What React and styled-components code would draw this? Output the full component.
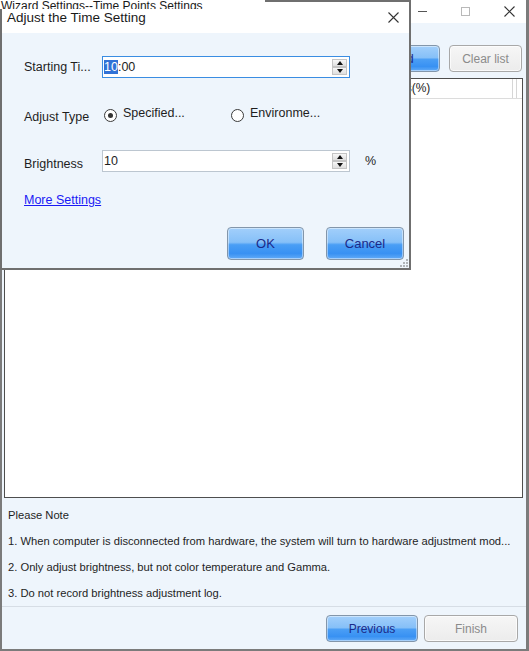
import React from "react";
import styled, { createGlobalStyle } from "styled-components";

const GlobalStyle = createGlobalStyle`
  html, body {
    margin: 0;
    padding: 0;
    background: #ffffff;
  }
  * {
    box-sizing: border-box;
  }
`;

const Screen = styled.div`
  position: relative;
  width: 529px;
  height: 651px;
  overflow: hidden;
  font-family: "Liberation Sans", Arial, sans-serif;
  color: #1e1e1e;
`;

/* ---------- main wizard window ---------- */

const Window = styled.div`
  height: 100%;
  display: flex;
  flex-direction: column;
  background: #eef5fc;
  border: 2px solid #7b7b7b;
  border-top: 0;
  border-right-width: 3px;
`;

const TitleBar = styled.div`
  height: 23px;
  flex: none;
  background: #ffffff;
  display: flex;
  align-items: center;
  justify-content: flex-end;
  gap: 34px;
  padding-right: 11px;
`;

const Toolbar = styled.div`
  flex: none;
  display: flex;
  justify-content: flex-end;
  gap: 9px;
  padding: 22px 4px 6px 0;
`;

const Button = styled.button`
  width: ${({ w }) => w}px;
  height: ${({ h }) => h || 27}px;
  padding: 0;
  border-radius: 4px;
  font-family: "Liberation Sans", Arial, sans-serif;
  font-size: ${({ fs }) => fs || 12}px;
  cursor: pointer;
  ${({ primary }) =>
    primary
      ? `
    border: 1px solid #8396aa;
    color: #1b2a8a;
    background: linear-gradient(#a2cffb 0%, #86c0f8 46%, #4a9ef5 54%, #3891f3 82%, #62abf7 100%);
    box-shadow: inset 0 0 0 1px rgba(255, 255, 255, 0.45);
  `
      : `
    border: 1px solid #a8a8a8;
    color: #8b8b8b;
    background: linear-gradient(#f6f6f6, #ececec);
    box-shadow: inset 0 0 0 1px rgba(255, 255, 255, 0.7);
  `}
`;

const Table = styled.div`
  flex: 1;
  margin: 0 3px 0 2px;
  border: 1px solid #4e4e4e;
  background: #ffffff;
  display: flex;
  flex-direction: column;
`;

const HeaderRow = styled.div`
  height: 20px;
  display: flex;
  border-bottom: 1px solid #dcdcdc;
`;

const HeaderCell = styled.div`
  width: ${({ w }) => (w ? `${w}px` : "auto")};
  flex: ${({ w }) => (w ? "none" : "1")};
  border-right: ${({ last }) => (last ? "0" : "1px solid #d6d6d6")};
  font-size: 12px;
  line-height: 19px;
  padding-left: 3px;
  white-space: nowrap;
  overflow: hidden;
`;

const Notes = styled.div`
  flex: none;
  padding: 4px 0 0 6px;
  font-size: 11.2px;
`;

const NoteLine = styled.div`
  height: 26px;
  line-height: 26px;
  white-space: nowrap;
`;

const Footer = styled.div`
  flex: none;
  border-top: 1px solid #d6dde5;
  display: flex;
  justify-content: flex-end;
  gap: 6px;
  padding: 8px 8px 7px 0;
`;

/* ---------- overlapping dialog ---------- */

const Dialog = styled.div`
  position: absolute;
  top: 0;
  left: 0;
  width: 411px;
  height: 270px;
  border: 2px solid #6f6f6f;
  background: #eef5fc;
  display: flex;
  flex-direction: column;
`;

const DialogTitle = styled.div`
  height: 31px;
  flex: none;
  background: #ffffff;
  display: flex;
  align-items: center;
  justify-content: space-between;
  padding: 0 10px 0 5px;
  font-size: 13.5px;
  color: #1a1a1a;
`;

const DialogBody = styled.div`
  flex: 1;
  padding: 23px 0 0 22px;
  display: flex;
  flex-direction: column;
`;

const FormRow = styled.div`
  height: 22px;
  margin-top: ${({ mt }) => mt || 0}px;
  display: flex;
  align-items: center;
  font-size: 12.5px;
`;

const Label = styled.div`
  width: 78px;
  flex: none;
  white-space: nowrap;
  padding-top: ${({ low }) => low || 0}px;
`;

const Input = styled.div`
  position: relative;
  width: 248px;
  height: 22px;
  background: #ffffff;
  border: 1px solid ${({ focused }) => (focused ? "#3a8de2" : "#bcc6d0")};
  padding-left: 1px;
  font-size: 12.5px;
  line-height: 20px;
  display: flex;
  align-items: flex-start;
`;

const Selected = styled.span`
  background: #3172d6;
  color: #ffffff;
  line-height: 14px;
  margin-top: 3px;
`;

const Plain = styled.span`
  line-height: 14px;
  margin-top: 3px;
`;

const Spin = styled.div`
  position: absolute;
  right: 2px;
  top: 2px;
  width: 15px;
  height: 16px;
  display: flex;
  flex-direction: column;
`;

const SpinHalf = styled.div`
  flex: 1;
  border: 1px solid #c4c4c4;
  background: linear-gradient(#f7f7f7, #dedede);
  display: flex;
  align-items: center;
  justify-content: center;
`;

const Unit = styled.span`
  margin-left: 15px;
  font-size: 12.5px;
`;

const RadioOption = styled.div`
  width: ${({ w }) => (w ? `${w}px` : "auto")};
  display: flex;
  align-items: center;
  gap: 6px;
  margin-left: ${({ ml }) => ml || 0}px;
  white-space: nowrap;
`;

const RadioText = styled.span`
  padding-bottom: 4px;
`;

const RadioDot = styled.span`
  width: 13px;
  height: 13px;
  border-radius: 50%;
  border: 1px solid #3a3a3a;
  background: #ffffff;
  display: flex;
  align-items: center;
  justify-content: center;
  &::after {
    content: "";
    width: 5px;
    height: 5px;
    border-radius: 50%;
    background: ${({ checked }) => (checked ? "#333333" : "transparent")};
  }
`;

const MoreLink = styled.a`
  margin-top: 21px;
  align-self: flex-start;
  font-size: 12.5px;
  line-height: 14px;
  color: #1a1af5;
  text-decoration: underline;
  cursor: pointer;
`;

const DialogActions = styled.div`
  margin-top: 20px;
  display: flex;
  justify-content: flex-end;
  gap: 22px;
  padding-right: 5px;
`;

const Grip = styled.svg`
  position: absolute;
  right: 1px;
  bottom: 1px;
`;

const GhostTitle = styled.div`
  position: absolute;
  top: 0;
  left: 0;
  width: 265px;
  height: 9px;
  overflow: hidden;
  background: #ffffff;
  padding-left: 1px;
  font-size: 12px;
  line-height: 12px;
  color: #1a1a1a;
  white-space: nowrap;
`;

const CloseIcon = ({ color = "#333" }) => (
  <svg width="11" height="11" viewBox="0 0 11 11">
    <path d="M0.5 0.5 L10.5 10.5 M10.5 0.5 L0.5 10.5" stroke={color} strokeWidth="1.1" />
  </svg>
);

const Arrow = ({ up }) => (
  <svg width="6" height="4" viewBox="0 0 6 4">
    <path d={up ? "M0 4 L3 0 L6 4 Z" : "M0 0 L6 0 L3 4 Z"} fill="#111" />
  </svg>
);

const SpinBox = ({ focused, children }) => (
  <Input focused={focused}>
    {children}
    <Spin>
      <SpinHalf>
        <Arrow up />
      </SpinHalf>
      <SpinHalf>
        <Arrow />
      </SpinHalf>
    </Spin>
  </Input>
);

const App = () => {
  return (
    <Screen>
      <GlobalStyle />
      <Window>
        <TitleBar>
          <svg width="9" height="9" viewBox="0 0 9 9">
            <path d="M0 4.5 H9" stroke="#555" strokeWidth="1" />
          </svg>
          <svg width="9" height="9" viewBox="0 0 9 9">
            <rect x="0.5" y="0.5" width="8" height="8" fill="none" stroke="#b9b9b9" />
          </svg>
          <CloseIcon />
        </TitleBar>
        <Toolbar>
          <Button primary w={74}>
            Add
          </Button>
          <Button w={73}>Clear list</Button>
        </Toolbar>
        <Table>
          <HeaderRow>
            <HeaderCell w={80}>No.</HeaderCell>
            <HeaderCell w={267}>Time</HeaderCell>
            <HeaderCell w={161}>Brightness(%)</HeaderCell>
            <HeaderCell w={4} />
            <HeaderCell last />
          </HeaderRow>
        </Table>
        <Notes>
          <NoteLine>Please Note</NoteLine>
          <NoteLine>
            1. When computer is disconnected from hardware, the system will turn to hardware adjustment mod...
          </NoteLine>
          <NoteLine>2. Only adjust brightness, but not color temperature and Gamma.</NoteLine>
          <NoteLine>3. Do not record brightness adjustment log.</NoteLine>
        </Notes>
        <Footer>
          <Button primary w={92}>
            Previous
          </Button>
          <Button w={94}>Finish</Button>
        </Footer>
      </Window>

      <Dialog>
        <DialogTitle>
          <span>Adjust the Time Setting</span>
          <CloseIcon />
        </DialogTitle>
        <DialogBody>
          <FormRow>
            <Label>Starting Ti...</Label>
            <SpinBox focused>
              <Selected>10</Selected>
              <Plain>:00</Plain>
            </SpinBox>
          </FormRow>
          <FormRow mt={26}>
            <Label low={3}>Adjust Type</Label>
            <RadioOption w={127} ml={2}>
              <RadioDot checked />
              <RadioText>Specified...</RadioText>
            </RadioOption>
            <RadioOption>
              <RadioDot />
              <RadioText>Environme...</RadioText>
            </RadioOption>
          </FormRow>
          <FormRow mt={24}>
            <Label low={6}>Brightness</Label>
            <SpinBox>
              <Plain>10</Plain>
            </SpinBox>
            <Unit>%</Unit>
          </FormRow>
          <MoreLink>More Settings</MoreLink>
          <DialogActions>
            <Button primary w={77} h={33} fs={13}>
              OK
            </Button>
            <Button primary w={78} h={33} fs={13}>
              Cancel
            </Button>
          </DialogActions>
        </DialogBody>
        <Grip width="8" height="8" viewBox="0 0 8 8">
          <g fill="#b0b4b8">
            <rect x="6" y="0" width="2" height="2" />
            <rect x="3" y="3" width="2" height="2" />
            <rect x="6" y="3" width="2" height="2" />
            <rect x="0" y="6" width="2" height="2" />
            <rect x="3" y="6" width="2" height="2" />
            <rect x="6" y="6" width="2" height="2" />
          </g>
        </Grip>
      </Dialog>
      <GhostTitle>Wizard Settings--Time Points Settings</GhostTitle>
    </Screen>
  );
};

export default App;
